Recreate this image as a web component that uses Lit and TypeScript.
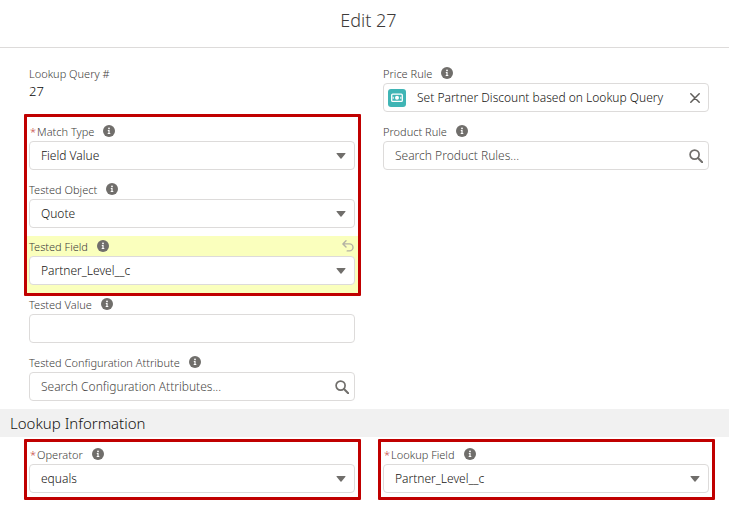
import { LitElement, html, css, nothing } from "lit";
import { customElement, property } from "lit/decorators.js";

const infoIcon = html`<svg class="info" viewBox="0 0 12 12" role="img" aria-label="Help">
  <circle cx="6" cy="6" r="6" fill="#706e6b"></circle>
  <circle cx="6" cy="3.4" r="0.9" fill="#fff"></circle>
  <path d="M4.8 5.1h1.8v3h.7v.9H4.7v-.9h.7V6h-.6z" fill="#fff"></path>
</svg>`;

const searchIcon = html`<svg class="glyph" viewBox="0 0 14 14" aria-hidden="true">
  <circle cx="5.6" cy="5.6" r="4.5" fill="none" stroke="#706e6b" stroke-width="1.7"></circle>
  <path d="M9 9l4.2 4.2" stroke="#706e6b" stroke-width="2" stroke-linecap="round"></path>
</svg>`;

const closeIcon = html`<svg class="cross" viewBox="0 0 10 10" aria-hidden="true">
  <path d="M.8.8l8.4 8.4M9.2.8L.8 9.2" stroke="#5f5d5a" stroke-width="1.5" stroke-linecap="round"></path>
</svg>`;

const arrowIcon = html`<svg class="arrow" viewBox="0 0 10 6" aria-hidden="true">
  <path d="M1 0h8q.9 0 .4.7L5.5 5.5q-.5.5-1 0L.6.7Q.1 0 1 0z" fill="#706e6b"></path>
</svg>`;

const undoIcon = html`<svg class="undo-glyph" viewBox="0 0 12 12" aria-hidden="true">
  <path d="M4 .8L.9 3.9 4 7M1.2 3.9h6.3a3.5 3.5 0 0 1 0 7H5.2" fill="none" stroke="#b3b2a4" stroke-width="1.4" stroke-linecap="round" stroke-linejoin="round"></path>
</svg>`;

const moneyIcon = html`<svg class="badge" viewBox="0 0 18 18" aria-hidden="true">
  <rect width="18" height="18" rx="3" fill="#3fb5b5"></rect>
  <rect x="3.7" y="5.2" width="10.6" height="7.2" rx="1" fill="none" stroke="#fff" stroke-width="1.3"></rect>
  <circle cx="9" cy="8.8" r="2" fill="#fff"></circle>
  <path d="M5.2 7.8v2M12.8 7.8v2" stroke="#fff" stroke-width="1"></path>
</svg>`;

type Kind = "select" | "search" | "text" | "record" | "static";

@customElement("form-field")
class FormField extends LitElement {
  @property() label = "";
  @property() kind: Kind = "text";
  @property() value = "";
  @property({ type: Boolean }) required = false;
  @property({ type: Boolean, reflect: true }) changed = false;

  static styles = css`
    :host {
      display: block;
      min-width: 0;
      padding: 1px 0 8px;
      color: #161412;
      font-size: 12px;
    }
    :host([changed]) {
      margin: 0 -3px;
      padding: 0 3px 8px;
      background: #faffbd;
    }
    .head {
      display: flex;
      align-items: center;
      height: 20px;
      color: #3e3c3a;
      font-size: 11px;
    }
    .star {
      margin: 0 1px;
      color: #c23934;
    }
    .info {
      width: 12px;
      height: 12px;
      margin-left: 9px;
    }
    .undo {
      display: flex;
      margin: 0 1px 0 auto;
      padding: 0;
      border: 0;
      background: none;
    }
    .undo-glyph {
      width: 12px;
      height: 12px;
    }
    .box {
      position: relative;
      display: flex;
      align-items: center;
      box-sizing: border-box;
      height: 29px;
      border: 1px solid #dddbda;
      border-radius: 4px;
      background: #fff;
    }
    .control {
      flex: 1;
      min-width: 0;
      height: 100%;
      box-sizing: border-box;
      margin: 0;
      padding: 0 11px;
      border: 0;
      background: none;
      appearance: none;
      outline: none;
      color: inherit;
      font: inherit;
    }
    .control::placeholder {
      color: #4a4846;
      opacity: 1;
    }
    .glyph {
      width: 14px;
      height: 14px;
      margin-right: 5px;
    }
    .arrow {
      position: absolute;
      right: 8px;
      width: 10px;
      height: 6px;
      pointer-events: none;
    }
    .badge {
      width: 18px;
      height: 18px;
      margin-left: 4px;
    }
    .clear {
      display: flex;
      margin-right: 8px;
      padding: 0;
      border: 0;
      background: none;
    }
    .cross {
      width: 10px;
      height: 10px;
    }
    .static {
      height: 29px;
      line-height: 16px;
      color: #080707;
      font-size: 13px;
    }
  `;

  private control() {
    switch (this.kind) {
      case "select":
        return html`<div class="box">
          <select id="c" class="control"><option>${this.value}</option></select>${arrowIcon}
        </div>`;
      case "search":
        return html`<div class="box">
          <input id="c" class="control" type="text" placeholder=${this.value} />${searchIcon}
        </div>`;
      case "record":
        return html`<div class="box">
          ${moneyIcon}<input id="c" class="control" type="text" readonly .value=${this.value} />
          <button class="clear" type="button" aria-label="Remove">${closeIcon}</button>
        </div>`;
      case "static":
        return html`<div class="static">${this.value}</div>`;
      default:
        return html`<div class="box"><input id="c" class="control" type="text" .value=${this.value} /></div>`;
    }
  }

  render() {
    const plain = this.kind === "static";
    return html`
      <div class="head">
        ${this.required ? html`<span class="star">*</span>` : nothing}
        ${plain ? html`<span>${this.label}</span>` : html`<label for="c">${this.label}</label>${infoIcon}`}
        ${this.changed
          ? html`<button class="undo" type="button" aria-label="Undo">${undoIcon}</button>`
          : nothing}
      </div>
      ${this.control()}
    `;
  }
}

@customElement("app-root")
class AppRoot extends LitElement {
  static styles = css`
    :host {
      display: block;
      background: #fff;
      font-family: "Noto Sans", "Open Sans", sans-serif;
      font-weight: 300;
    }
    .title {
      margin: 0;
      height: 47px;
      border-bottom: 1px solid #dddbda;
      color: #3e3c3a;
      font-size: 18px;
      font-weight: 300;
      line-height: 41px;
      text-align: center;
      text-indent: 8px;
    }
    .columns {
      display: grid;
      grid-template-columns: 1fr 1fr;
      align-items: start;
      gap: 28px;
      padding: 0 20px 0 29px;
    }
    .details {
      padding-top: 14px;
    }
    .section {
      margin: 0 0 6px;
      padding-left: 10px;
      background: #f1f1f1;
      color: #161412;
      font-size: 15px;
      font-weight: 300;
      line-height: 28px;
    }
    .marked {
      position: relative;
    }
    .marked::after {
      content: "";
      position: absolute;
      inset: -4px -6px 1px -5px;
      border: 3px solid #c00000;
      border-radius: 1px;
      pointer-events: none;
    }
    .group::after {
      inset: -6px -6px -3px -5px;
    }
  `;

  render() {
    return html`
      <h1 class="title">Edit 27</h1>
      <div class="columns details">
        <div>
          <form-field kind="static" label="Lookup Query #" value="27"></form-field>
          <div class="marked group">
            <form-field kind="select" required label="Match Type" value="Field Value"></form-field>
            <form-field kind="select" label="Tested Object" value="Quote"></form-field>
            <form-field kind="select" changed label="Tested Field" value="Partner_Level__c"></form-field>
          </div>
          <form-field label="Tested Value"></form-field>
          <form-field
            kind="search"
            label="Tested Configuration Attribute"
            value="Search Configuration Attributes..."
          ></form-field>
        </div>
        <div>
          <form-field
            kind="record"
            label="Price Rule"
            value="Set Partner Discount based on Lookup Query"
          ></form-field>
          <form-field kind="search" label="Product Rule" value="Search Product Rules..."></form-field>
        </div>
      </div>
      <h2 class="section">Lookup Information</h2>
      <div class="columns">
        <div class="marked">
          <form-field kind="select" required label="Operator" value="equals"></form-field>
        </div>
        <div class="marked">
          <form-field kind="select" required label="Lookup Field" value="Partner_Level__c"></form-field>
        </div>
      </div>
    `;
  }
}
